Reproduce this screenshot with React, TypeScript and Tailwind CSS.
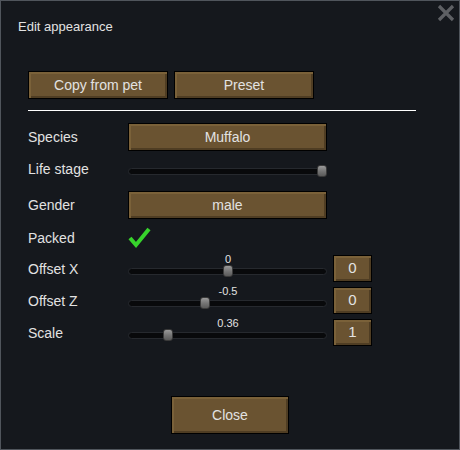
import React from "react";

const btn =
  "flex items-center justify-center border border-black bg-[#6a5331] text-[#e2e2e2] shadow-[inset_2px_2px_0_#7a6139,inset_-2px_-2px_0_#4f3d23]";

const Slider = ({ left, value }: { left: number; value?: string }) => (
  <div className="relative w-[199px] h-full">
    {value && (
      <div className="absolute top-[-2px] left-[100px] text-[11px] leading-[12px] -translate-x-1/2 text-[#e2e2e2]">
        {value}
      </div>
    )}
    <div className="absolute left-0 right-0 top-[13px] h-[7px] rounded-full bg-[#08090b] border border-[#26292e]" />
    <div
      className="absolute top-[10px] w-[10px] h-[12px] rounded-[3px] border border-[#3a3a3a] bg-gradient-to-b from-[#9a9a9a] via-[#767676] to-[#5a5a5a]"
      style={{ left }}
    />
  </div>
);

const Label = ({ children }: { children: React.ReactNode }) => (
  <div className="w-[100px] text-[14px] leading-[16px]">{children}</div>
);

export default function App() {
  const sliders = [
    { label: "Offset X", left: 95, value: "0", box: "0", mt: "mt-[3px]" },
    { label: "Offset Z", left: 72, value: "-0.5", box: "0", mt: "mt-[5px]" },
    { label: "Scale", left: 35, value: "0.36", box: "1", mt: "mt-[5px]" },
  ];

  return (
    <div className="relative w-[460px] h-[450px] bg-[#15181d] border border-[#50555c] text-[#e2e2e2] font-['Liberation_Sans',Arial,sans-serif]">
      {/* close cross */}
      <svg className="absolute right-[4px] top-[3px]" width="18" height="18" viewBox="0 0 18 18">
        <path d="M2 2 L16 16 M16 2 L2 16" stroke="#5e6064" strokeWidth="3.2" />
      </svg>

      <div className="pt-[18px] pl-[17px] text-[13px] leading-[16px]">Edit appearance</div>

      <div className="pl-[27px]">
        <div className="mt-[36px] flex gap-[6px]">
          <div className={`${btn} w-[140px] h-[28px] text-[14px]`}>Copy from pet</div>
          <div className={`${btn} w-[140px] h-[28px] text-[14px]`}>Preset</div>
        </div>

        <div className="mt-[11px] w-[388px] h-px bg-white" />

        <div className="mt-[12px] flex items-center h-[28px]">
          <Label>Species</Label>
          <div className={`${btn} w-[199px] h-[28px] text-[14px]`}>Muffalo</div>
        </div>

        <div className="mt-[4px] flex items-center h-[27px]">
          <Label>Life stage</Label>
          <Slider left={189} />
        </div>

        <div className="mt-[9px] flex items-center h-[28px]">
          <Label>Gender</Label>
          <div className={`${btn} w-[199px] h-[28px] text-[14px]`}>male</div>
        </div>

        <div className="mt-[5px] flex items-center h-[28px]">
          <Label>Packed</Label>
          <svg width="24" height="22" viewBox="0 0 24 22">
            <path d="M2 11 L8 18 L21 2" fill="none" stroke="#37d32c" strokeWidth="4" strokeLinejoin="miter" />
          </svg>
        </div>

        {sliders.map((s) => (
          <div key={s.label} className={`${s.mt} flex items-center h-[27px]`}>
            <Label>{s.label}</Label>
            <Slider left={s.left} value={s.value} />
            <div className={`${btn} ml-[6px] w-[39px] h-[27px] text-[15px]`}>{s.box}</div>
          </div>
        ))}
      </div>

      <div className={`${btn} mx-auto mt-[50px] w-[118px] h-[38px] text-[14px]`}>Close</div>
    </div>
  );
}
